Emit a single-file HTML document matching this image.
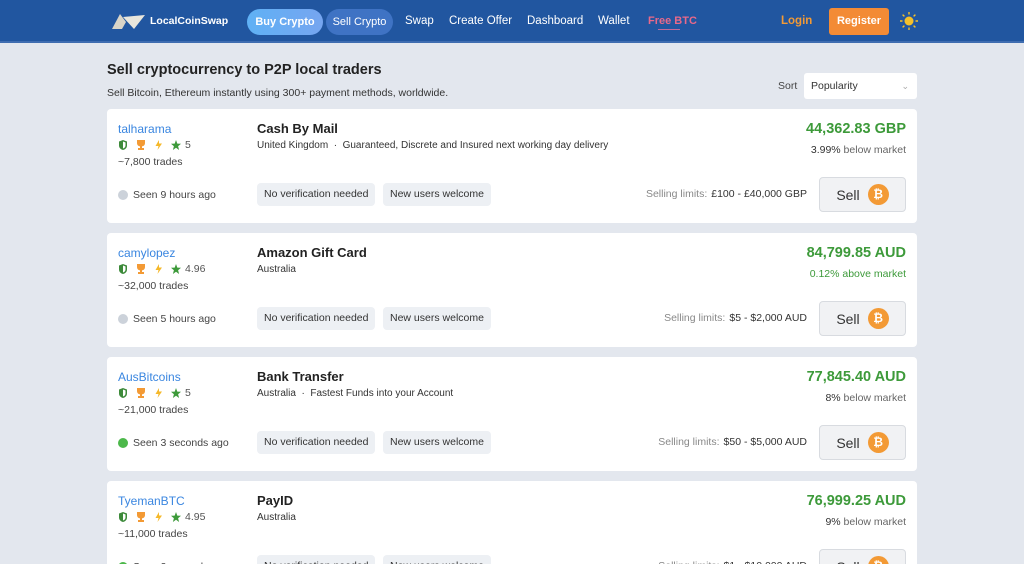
<!DOCTYPE html><html><head><style>
*{box-sizing:border-box;margin:0;padding:0}
html,body{width:1024px;height:564px;overflow:hidden}
body{background:#e3e7ee;font-family:"Liberation Sans",sans-serif;color:#222;position:relative}
.hdr{position:absolute;left:0;top:0;width:1024px;height:43px;background:#2156a0;border-bottom:2px solid #3f6db0}
.hdr .t{position:absolute;top:21px;transform:translateY(-50%);color:#fff;font-size:11.5px}
.pill{position:absolute;top:9px;height:26px;border-radius:13px;color:#fff;font-size:11px;line-height:26px;text-align:center}
h1{position:absolute;left:107px;top:62px;font-size:14.5px;font-weight:bold;color:#222}
.sub{position:absolute;left:107px;top:87px;font-size:10.5px;color:#333}
.card{position:absolute;left:107px;width:810px;height:114px;background:#fff;border-radius:4px}
.a{position:absolute;font-size:10.5px}
.u{left:11px;top:13px;color:#3a86e0;font-size:12px}
.ic{left:11px;top:30px;font-size:10.5px;color:#555;display:flex;gap:8px;align-items:center}
.tr{left:11px;top:47px;color:#444}
.seen{left:11px;top:80px;color:#444;display:flex;align-items:center;gap:5px}
.dot{width:10px;height:10px;border-radius:5px;background:#ccd2da}
.ti{left:150px;top:12px;font-size:13px;font-weight:bold;color:#222}
.co{left:150px;top:31px;color:#333;font-size:10px}
.tag{top:74px;height:23px;line-height:23px;background:#edf0f4;border-radius:4px;padding:0 7px;color:#333;font-size:10.5px}
.pr{right:11px;top:12px;color:#3d9a3a;font-size:14.5px;font-weight:bold}
.bm{right:11px;top:35px;color:#666;font-size:10.5px}.bm b{color:#333;font-weight:normal}
.lim{right:110px;top:79px;color:#888;font-size:10.5px}.lim span{color:#333;margin-left:4px}
.sell{position:absolute;right:11px;top:68px;width:87px;height:35px;background:#f1f2f4;border:1px solid #d8dbe0;border-radius:4px;font-size:14px;color:#333;display:flex;align-items:center;justify-content:center;gap:8px}
.btc{width:21px;height:21px;border-radius:11px;background:#f39a35;color:#fff;font-size:12px;font-weight:bold;text-align:center;line-height:21px}
</style></head><body>
<div class="hdr">
<svg style="position:absolute;left:112px;top:14px" width="34" height="15" viewBox="0 0 34 15"><path d="M0 15L8 0L14 8L10 15Z" fill="#d8d4c8"/><path d="M11 3L33 1L22 15Z" fill="#e9e6dc"/></svg>
<div class="t" style="left:150px;font-weight:bold;font-size:10.5px">LocalCoinSwap</div>
<div class="pill" style="left:247px;width:76px;background:linear-gradient(90deg,#5fb1f5,#76a5f0);font-weight:bold">Buy Crypto</div>
<div class="pill" style="left:326px;width:67px;background:#3f73c4">Sell Crypto</div>
<div class="t" style="left:405px">Swap</div>
<div class="t" style="left:449px">Create Offer</div>
<div class="t" style="left:527px">Dashboard</div>
<div class="t" style="left:598px">Wallet</div>
<div class="t" style="left:648px;color:#e9698a;font-weight:bold;font-size:11px">Free BTC</div>
<div style="position:absolute;left:658px;top:29px;width:22px;height:1px;background:#c06a9a"></div>
<div class="t" style="left:781px;color:#f39a35;font-weight:bold">Login</div>
<div style="position:absolute;left:829px;top:8px;width:60px;height:27px;background:#f38b35;border-radius:3px;color:#fff;font-size:11px;font-weight:bold;line-height:27px;text-align:center">Register</div>
<svg style="position:absolute;left:900px;top:12px" width="18" height="18" viewBox="0 0 18 18"><circle cx="9" cy="9" r="4.5" fill="#f5c02a"/><g stroke="#f5c02a" stroke-width="1.4"><path d="M9 0v2.5M9 15.5V18M0 9h2.5M15.5 9H18M2.6 2.6l1.8 1.8M13.6 13.6l1.8 1.8M2.6 15.4l1.8-1.8M13.6 4.4l1.8-1.8"/></g></svg>
</div>
<h1>Sell cryptocurrency to P2P local traders</h1>
<div class="sub">Sell Bitcoin, Ethereum instantly using 300+ payment methods, worldwide.</div>
<div style="position:absolute;left:778px;top:80px;font-size:10.5px;color:#444">Sort</div>
<div style="position:absolute;left:804px;top:73px;width:113px;height:26px;background:#fff;border-radius:3px;font-size:10.5px;line-height:26px;padding-left:7px;color:#333">Popularity<span style="position:absolute;right:8px;color:#aaa;font-size:9px">&#8964;</span></div>

<svg width="0" height="0" style="position:absolute"><defs>
<g id="icons">
<path d="M1 1.5L5 0L9 1.5V5.5C9 8 7 9.5 5 10C3 9.5 1 8 1 5.5Z" fill="#3d8a3a"/><path d="M5 1.5V8.5C6.5 8 7.5 7 7.5 5.5V2.5Z" fill="#fff"/>
<g transform="translate(18,0)" fill="#f39a35"><path d="M1 0H9V3C9 5.5 7 6.5 5 6.5C3 6.5 1 5.5 1 3Z"/><path d="M4 6H6V8H8V10H2V8H4Z"/></g>
<path transform="translate(36,0)" d="M5 0L1.5 6H4.5L3.5 10L8 3.5H5Z" fill="#f5b82a"/>
<path transform="translate(53,0)" d="M5 0L6.3 3.6L10 3.8L7.1 6.2L8.1 10L5 7.8L1.9 10L2.9 6.2L0 3.8L3.7 3.6Z" fill="#3d9a3a"/>
</g></defs></svg>

<div class="card" style="top:109px">
<div class="a u">talharama</div>
<svg class="a" style="left:11px;top:31px" width="66" height="11"><use href="#icons"/></svg><div class="a" style="left:78px;top:30px;color:#555">5</div>
<div class="a tr">~7,800 trades</div>
<div class="a seen"><div class="dot"></div>Seen 9 hours ago</div>
<div class="a ti">Cash By Mail</div>
<div class="a co">United Kingdom &nbsp;·&nbsp; Guaranteed, Discrete and Insured next working day delivery</div>
<div class="a tag" style="left:150px">No verification needed</div><div class="a tag" style="left:276px">New users welcome</div>
<div class="a pr">44,362.83 GBP</div><div class="a bm"><b>3.99%</b> below market</div>
<div class="a lim">Selling limits:<span>£100 - £40,000 GBP</span></div>
<div class="sell">Sell<div class="btc">₿</div></div>
</div>

<div class="card" style="top:233px">
<div class="a u">camylopez</div>
<svg class="a" style="left:11px;top:31px" width="66" height="11"><use href="#icons"/></svg><div class="a" style="left:78px;top:30px;color:#555">4.96</div>
<div class="a tr">~32,000 trades</div>
<div class="a seen"><div class="dot"></div>Seen 5 hours ago</div>
<div class="a ti">Amazon Gift Card</div>
<div class="a co">Australia</div>
<div class="a tag" style="left:150px">No verification needed</div><div class="a tag" style="left:276px">New users welcome</div>
<div class="a pr">84,799.85 AUD</div><div class="a bm" style="color:#3d9a3a">0.12% above market</div>
<div class="a lim">Selling limits:<span>$5 - $2,000 AUD</span></div>
<div class="sell">Sell<div class="btc">₿</div></div>
</div>

<div class="card" style="top:357px">
<div class="a u">AusBitcoins</div>
<svg class="a" style="left:11px;top:31px" width="66" height="11"><use href="#icons"/></svg><div class="a" style="left:78px;top:30px;color:#555">5</div>
<div class="a tr">~21,000 trades</div>
<div class="a seen"><div class="dot" style="background:#4cb84a"></div>Seen 3 seconds ago</div>
<div class="a ti">Bank Transfer</div>
<div class="a co">Australia &nbsp;·&nbsp; Fastest Funds into your Account</div>
<div class="a tag" style="left:150px">No verification needed</div><div class="a tag" style="left:276px">New users welcome</div>
<div class="a pr">77,845.40 AUD</div><div class="a bm"><b>8%</b> below market</div>
<div class="a lim">Selling limits:<span>$50 - $5,000 AUD</span></div>
<div class="sell">Sell<div class="btc">₿</div></div>
</div>

<div class="card" style="top:481px">
<div class="a u">TyemanBTC</div>
<svg class="a" style="left:11px;top:31px" width="66" height="11"><use href="#icons"/></svg><div class="a" style="left:78px;top:30px;color:#555">4.95</div>
<div class="a tr">~11,000 trades</div>
<div class="a seen"><div class="dot" style="background:#4cb84a"></div>Seen 2 seconds ago</div>
<div class="a ti">PayID</div>
<div class="a co">Australia</div>
<div class="a tag" style="left:150px">No verification needed</div><div class="a tag" style="left:276px">New users welcome</div>
<div class="a pr">76,999.25 AUD</div><div class="a bm"><b>9%</b> below market</div>
<div class="a lim">Selling limits:<span>$1 - $10,000 AUD</span></div>
<div class="sell">Sell<div class="btc">₿</div></div>
</div>
</body></html>
